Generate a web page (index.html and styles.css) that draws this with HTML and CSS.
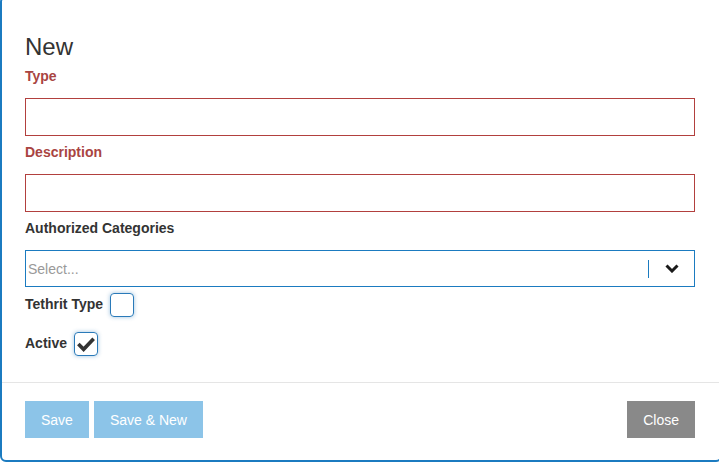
FILE: index.html
```html
<!DOCTYPE html>
<html lang="en">
<head>
    <meta charset="UTF-8">
    <meta name="viewport" content="width=device-width, initial-scale=1.0">
    <title>New</title>
    <link rel="stylesheet" href="styles.css">
</head>
<body>
    <div class="modal">
        <div class="modal-body">
            <h4 class="modal-title">New</h4>

            <div class="form-group has-error">
                <label class="control-label">Type</label>
                <input type="text" class="form-control">
            </div>

            <div class="form-group has-error">
                <label class="control-label">Description</label>
                <input type="text" class="form-control">
            </div>

            <div class="form-group">
                <label class="control-label">Authorized Categories</label>
                <div class="select">
                    <span class="select-placeholder">Select...</span>
                    <span class="select-separator"></span>
                    <span class="select-arrow">
                        <svg width="14" height="9" viewBox="0 0 14 9">
                            <path d="M1.5 1.5 L7 7 L12.5 1.5" fill="none" stroke="#1a1a1a" stroke-width="3"/>
                        </svg>
                    </span>
                </div>
            </div>

            <div class="check-row first">
                <span class="control-label">Tethrit Type</span>
                <span class="checkbox"></span>
            </div>

            <div class="check-row">
                <span class="control-label">Active</span>
                <span class="checkbox">
                    <svg width="23" height="23" viewBox="0 0 23 23">
                        <path d="M3.5 11 L9 16.5 L19.5 5.5" fill="none" stroke="#333" stroke-width="3.8"/>
                    </svg>
                </span>
            </div>
        </div>

        <div class="modal-footer">
            <div class="footer-left">
                <button class="btn btn-primary" disabled>Save</button>
                <button class="btn btn-primary" disabled>Save &amp; New</button>
            </div>
            <button class="btn btn-default">Close</button>
        </div>
    </div>
</body>
</html>
```

FILE: styles.css
```css
body {
    margin: 0;
    background-color: #fff;
    font-family: 'Liberation Sans', Arial, sans-serif;
    color: #333;
    overflow: hidden;
}

/* Modal */
.modal {
    box-sizing: border-box;
    width: 722px;
    height: 466px;
    margin-top: -4px;
    border: 2px solid #1b7bc0;
    border-radius: 6px;
    background-color: #fff;
    display: flex;
    flex-direction: column;
}

.modal-body {
    padding: 36px 25px 0 23px;
    flex: 1;
}

.modal-title {
    margin: 0;
    font-size: 24px;
    font-weight: normal;
    line-height: 26px;
    color: #333;
}

/* Form */
.form-group {
    display: flex;
    flex-direction: column;
    margin-top: 8px;
}

.control-label {
    font-size: 14px;
    font-weight: bold;
    line-height: 16px;
    color: #333;
}

.form-group .control-label {
    margin-bottom: 14px;
}

.form-control {
    box-sizing: border-box;
    height: 38px;
    width: 100%;
    margin: 0;
    border: 1px solid #1b7bc0;
    border-radius: 0;
    outline: none;
    font-family: inherit;
    font-size: 14px;
}

.has-error .control-label {
    color: #a94442;
}

.has-error .form-control {
    border-color: #b2403e;
}

/* Select */
.select {
    box-sizing: border-box;
    height: 37px;
    border: 1px solid #1b7bc0;
    display: flex;
    align-items: center;
}

.select-placeholder {
    flex: 1;
    padding-left: 2px;
    font-size: 14px;
    color: #999;
}

.select-separator {
    width: 1px;
    height: 18px;
    background-color: #1b7bc0;
}

.select-arrow {
    width: 45px;
    display: flex;
    justify-content: center;
    align-items: center;
}

/* Checkboxes */
.check-row {
    display: flex;
    align-items: center;
    gap: 7px;
    margin-top: 15px;
}

.check-row.first {
    margin-top: 6px;
}

.check-row .control-label {
    margin-bottom: 2px;
}

.checkbox {
    box-sizing: border-box;
    width: 24px;
    height: 24px;
    border: 1px solid #2a7ab9;
    border-radius: 4px;
    box-shadow: 0 0 4px rgba(42, 122, 185, 0.45);
    display: flex;
}

/* Footer */
.modal-footer {
    border-top: 1px solid #e5e5e5;
    padding: 18px 25px 22px 23px;
    display: flex;
    justify-content: space-between;
}

.footer-left {
    display: flex;
    gap: 5px;
}

.btn {
    height: 37px;
    padding: 0 16px;
    border: none;
    border-radius: 0;
    font-family: inherit;
    font-size: 14px;
    color: #fff;
}

.btn-primary {
    background-color: #8cc4e8;
}

.btn-default {
    background-color: #898989;
}
```
